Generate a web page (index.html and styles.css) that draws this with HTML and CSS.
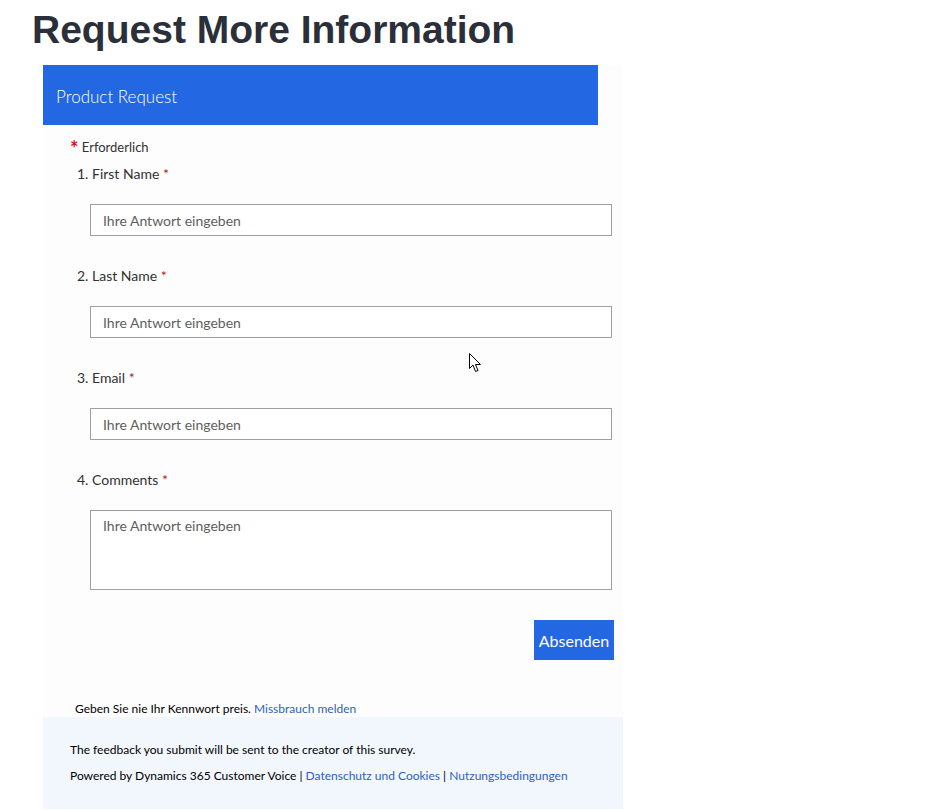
FILE: index.html
```html
<!DOCTYPE html>
<html lang="de">
<head>
    <meta charset="UTF-8">
    <meta name="viewport" content="width=device-width, initial-scale=1.0">
    <title>Request More Information</title>
    <link rel="stylesheet" href="styles.css">
</head>
<body>

<h1 class="page-title">Request More Information</h1>

<div class="survey">
    <div class="survey-header">Product Request</div>

    <div class="survey-body">
        <p class="required-note"><span class="req-star">*</span> Erforderlich</p>

        <div class="question">
            <label class="question-title" for="q1">1. First Name <span class="req">*</span></label>
            <input class="answer" type="text" id="q1" placeholder="Ihre Antwort eingeben">
        </div>

        <div class="question">
            <label class="question-title" for="q2">2. Last Name <span class="req">*</span></label>
            <input class="answer" type="text" id="q2" placeholder="Ihre Antwort eingeben">
        </div>

        <div class="question">
            <label class="question-title" for="q3">3. Email <span class="req">*</span></label>
            <input class="answer" type="text" id="q3" placeholder="Ihre Antwort eingeben">
        </div>

        <div class="question question-long">
            <label class="question-title" for="q4">4. Comments <span class="req">*</span></label>
            <textarea class="answer answer-long" id="q4" placeholder="Ihre Antwort eingeben"></textarea>
        </div>

        <div class="actions">
            <button class="submit" type="button">Absenden</button>
        </div>

        <p class="password-note">Geben Sie nie Ihr Kennwort preis. <a href="#">Missbrauch melden</a></p>
    </div>

    <div class="survey-footer">
        <p>The feedback you submit will be sent to the creator of this survey.</p>
        <p>Powered by Dynamics 365 Customer Voice | <a href="#">Datenschutz und Cookies</a> | <a href="#">Nutzungsbedingungen</a></p>
    </div>
</div>

<!-- mouse pointer -->
<svg class="pointer" width="13" height="20" viewBox="0 0 13 20">
    <path d="M0.5 0.5 L0.5 15.5 L4 12 L6.5 18.5 L9 17.5 L6.5 11.5 L11.5 11.5 Z" fill="#fff" stroke="#000" stroke-width="1"/>
</svg>

</body>
</html>
```

FILE: styles.css
```css
body {
    margin: 0;
    padding: 0 0 0 32px;
    background-color: #fff;
    font-family: 'Segoe UI', 'Lato', 'Open Sans', sans-serif;
    color: #323130;
    position: relative;
}
a {
    color: #2b64b8;
    text-decoration: none;
}
.page-title {
    font-family: 'Liberation Sans', Arial, sans-serif;
    font-size: 39px;
    font-weight: bold;
    color: #2b2f3a;
    margin: 7px 0 0 0;
    line-height: 46px;
}
.survey {
    margin: 12px 0 0 11px;
    width: 580px;
    background-color: #fdfdfd;
}
.survey-header {
    width: 542px;
    height: 60px;
    background-color: #2368e2;
    color: #fff;
    font-family: 'Lato', sans-serif;
    font-weight: 300;
    font-size: 17px;
    line-height: 64px;
    padding-left: 13px;
}
.survey-body {
    padding: 13px 0 0 27px;
}
.required-note {
    margin: 0;
    font-size: 13px;
    line-height: 19px;
}
.req-star {
    color: #e00b1c;
    font-size: 20px;
    font-weight: bold;
    vertical-align: -4px;
}
.question {
    margin-top: 6px;
    padding-left: 7px;
    height: 96px;
}
.question-long {
    height: auto;
}
.question-title {
    display: block;
    font-size: 14px;
    line-height: 20px;
}
.req {
    color: #a4262c;
}
.answer {
    display: block;
    box-sizing: border-box;
    width: 522px;
    height: 32px;
    margin: 20px 0 0 13px;
    padding: 0 12px;
    border: 1px solid #a19f9d;
    font-family: inherit;
    font-size: 14px;
    color: #323130;
    background: #fff;
}
.answer::placeholder {
    color: #605e5c;
}
.answer-long {
    height: 80px;
    padding-top: 6px;
    resize: none;
}
.actions {
    display: flex;
    justify-content: flex-end;
    width: 544px;
    margin-top: 30px;
}
.submit {
    width: 80px;
    height: 40px;
    border: none;
    background-color: #2368e2;
    color: #fff;
    font-family: inherit;
    font-size: 16px;
    padding: 0;
}
.password-note {
    margin: 41px 0 0 5px;
    font-size: 12px;
    line-height: 16px;
    color: #000;
}
.survey-footer {
    background-color: #f2f6fd;
    padding: 20px 0 20px 27px;
    font-size: 12px;
    color: #000;
}
.survey-footer p {
    margin: 0;
    line-height: 26px;
}
.pointer {
    position: absolute;
    left: 469px;
    top: 353px;
}
```
